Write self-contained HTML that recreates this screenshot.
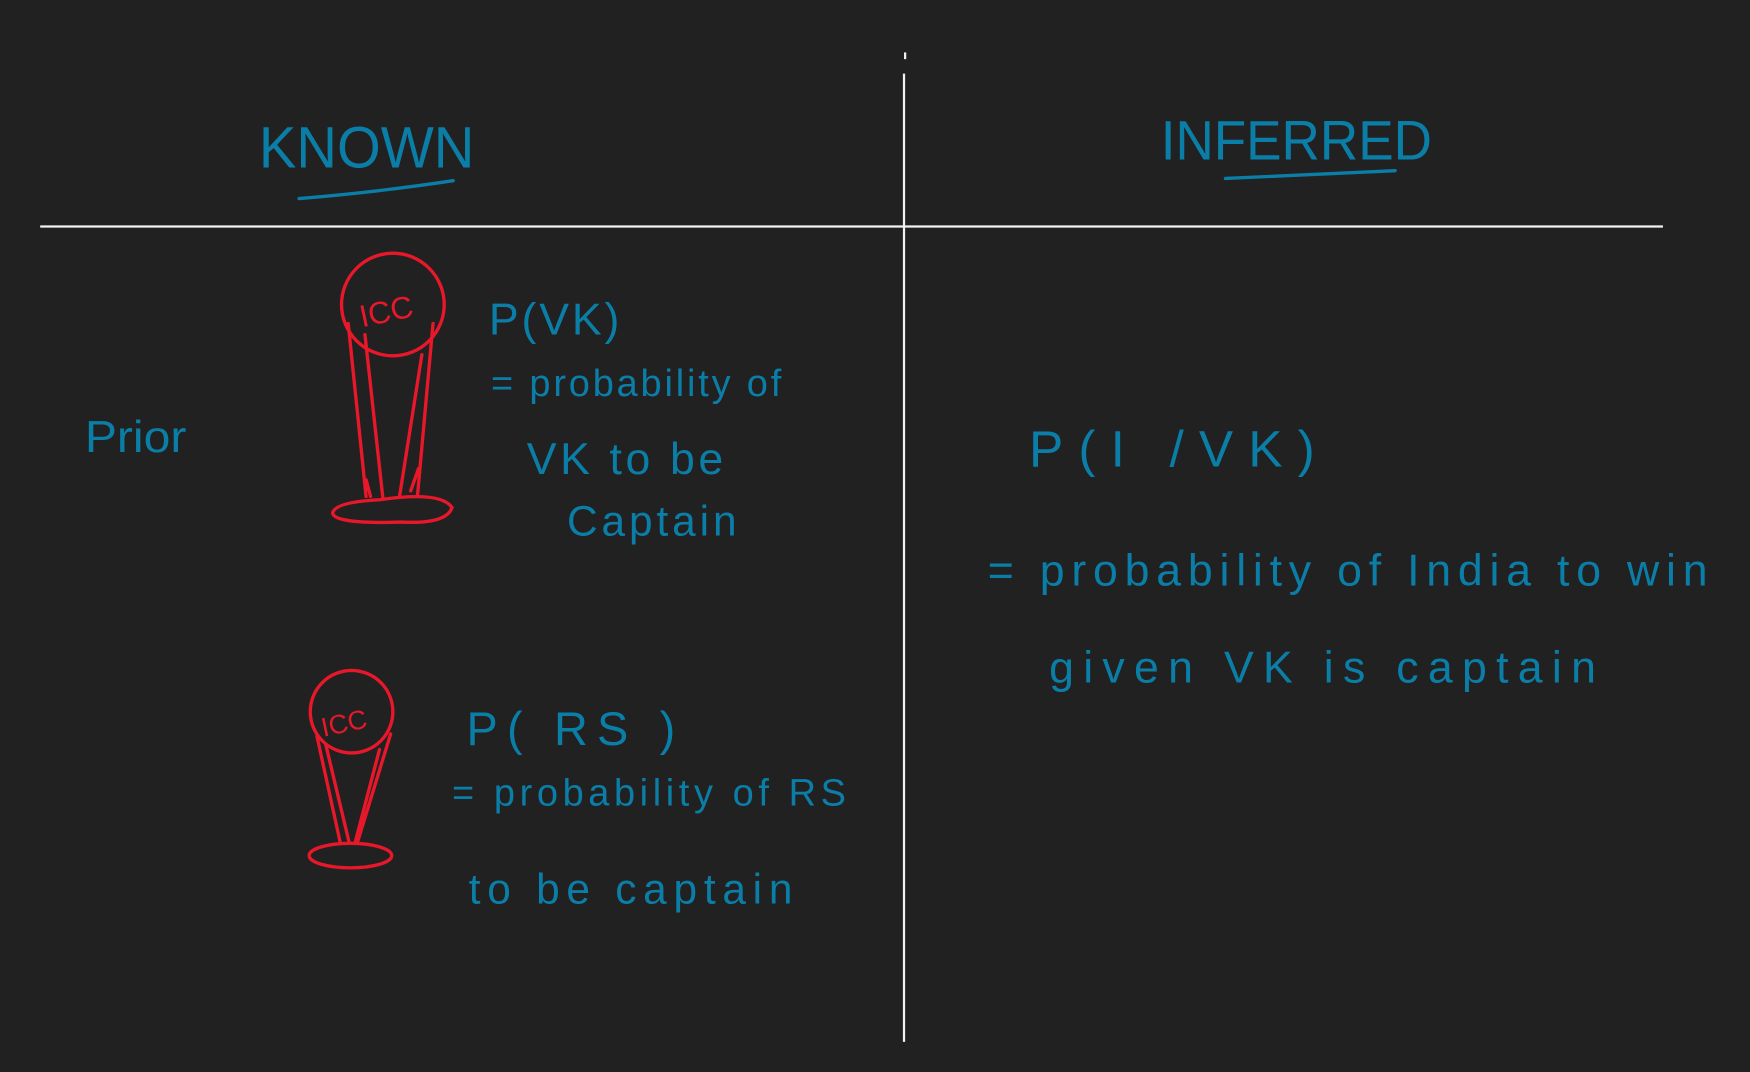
<!DOCTYPE html>
<html><head><meta charset="utf-8"><style>
html,body{margin:0;padding:0;background:#212121;width:1750px;height:1072px;overflow:hidden}
svg{display:block}
text{font-family:"Liberation Sans",sans-serif;fill:#0b7ea8;font-weight:normal}
</style></head><body>
<svg width="1750" height="1072" viewBox="0 0 1568 961" preserveAspectRatio="none">
<rect width="1568" height="961" fill="#212121"/>
<g stroke="#f2f2f2" stroke-width="2" fill="none">
<line x1="36" y1="203" x2="1490" y2="203"/>
<line x1="810" y1="66" x2="810" y2="934"/>
<line x1="811" y1="47" x2="811" y2="53"/>
</g>
<g stroke="#0b7ea8" stroke-width="3" fill="none" stroke-linecap="round">
<path d="M268 178 Q340 172 406 162"/>
<path d="M1098 160 Q1180 156 1250 153"/>
</g>
<text x="232" y="150" font-size="52" textLength="193" lengthAdjust="spacingAndGlyphs">KNOWN</text>
<text x="1040" y="143" font-size="50" textLength="243" lengthAdjust="spacingAndGlyphs">INFERRED</text>
<text x="76" y="405" font-size="40" textLength="91" lengthAdjust="spacingAndGlyphs">Prior</text>
<text x="438" y="300" font-size="40" textLength="117" lengthAdjust="spacing">P(VK)</text>
<text x="440" y="355" font-size="34" textLength="260" lengthAdjust="spacing">= probability of</text>
<text x="472" y="425" font-size="40" textLength="176" lengthAdjust="spacing">VK to be</text>
<text x="508" y="480" font-size="38" textLength="152" lengthAdjust="spacing">Captain</text>
<text x="418" y="668" font-size="42" textLength="187" lengthAdjust="spacing">P( RS )</text>
<text x="405" y="722" font-size="34" textLength="353" lengthAdjust="spacing">= probability of RS</text>
<text x="420" y="810" font-size="38" textLength="290" lengthAdjust="spacing">to be captain</text>
<text x="922" y="418" font-size="46" textLength="256" lengthAdjust="spacing">P(I /VK)</text>
<text x="885" y="525" font-size="40" textLength="645" lengthAdjust="spacing">= probability of India to win</text>
<text x="940" y="612" font-size="40" textLength="490" lengthAdjust="spacing">given VK is captain</text>
<g stroke="#e8182a" stroke-width="3" fill="none" stroke-linecap="round">
<circle cx="352" cy="273" r="46"/>
<path d="M312 290 L328 445 M327 300 L343 446 M388 290 L374 445 M378 318 L358 445 M375 420 L368 440 M328 430 L332 445"/>
<path d="M298 460 Q300 450 340 448 Q395 440 405 455 Q400 470 360 468 Q300 470 298 460 Z"/>
<circle cx="315" cy="638" r="37"/>
<path d="M284 660 L305 756 M292 668 L313 756 M350 658 L320 756 M340 672 L318 756"/>
<ellipse cx="314" cy="767" rx="37" ry="11"/>
</g>
<text x="322" y="290" font-size="28" style="fill:#e8182a" transform="rotate(-12 340 280)">ICC</text>
<text x="287" y="656" font-size="24" style="fill:#e8182a" transform="rotate(-12 310 645)">ICC</text>
</svg>
</body></html>
